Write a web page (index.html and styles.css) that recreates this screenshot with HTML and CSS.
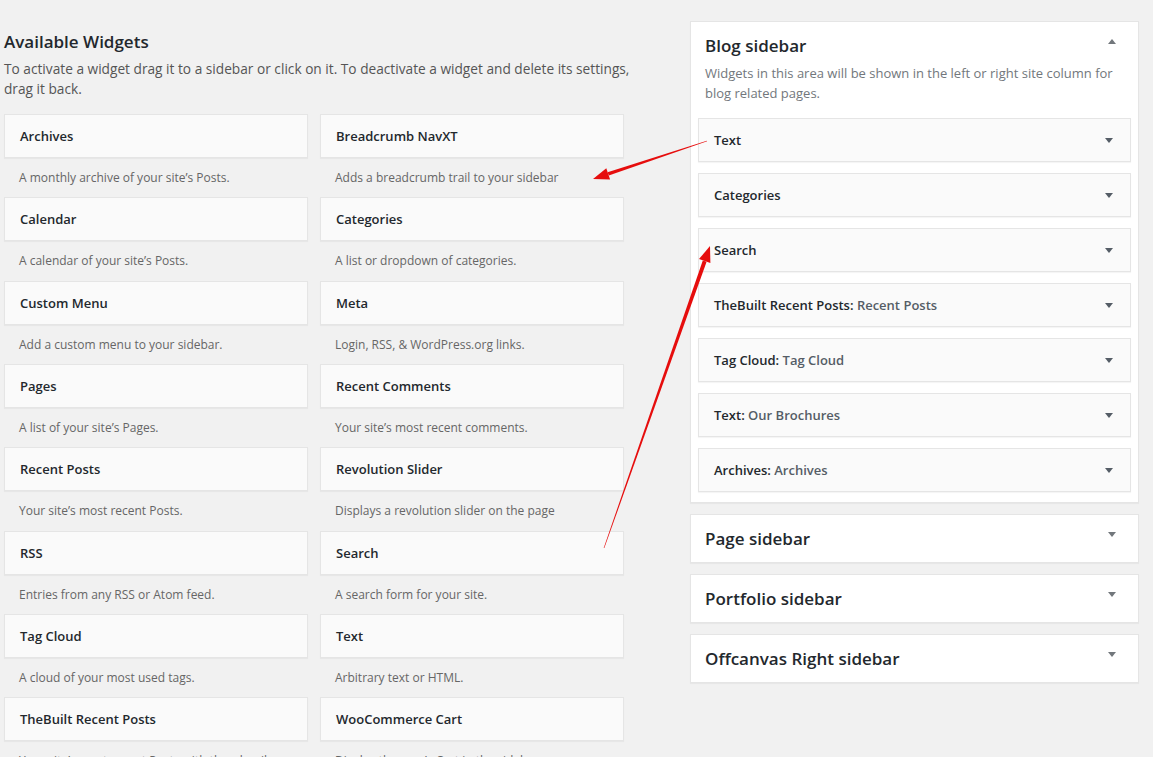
FILE: index.html
```html
<!DOCTYPE html>
<html lang="en">
<head>
<meta charset="utf-8">
<title>Widgets</title>
<link rel="stylesheet" href="styles.css">
</head>
<body>
<div class="page">
  <section class="available">
    <h2 class="section-title">Available Widgets</h2>
    <p class="section-desc">To activate a widget drag it to a sidebar or click on it. To deactivate a widget and delete its settings, drag it back.</p>
    <div class="widget-grid">
      <div class="widget-item"><div class="widget-card">Archives</div><p class="widget-desc">A monthly archive of your site’s Posts.</p></div>
      <div class="widget-item"><div class="widget-card">Breadcrumb NavXT</div><p class="widget-desc">Adds a breadcrumb trail to your sidebar</p></div>
      <div class="widget-item"><div class="widget-card">Calendar</div><p class="widget-desc">A calendar of your site’s Posts.</p></div>
      <div class="widget-item"><div class="widget-card">Categories</div><p class="widget-desc">A list or dropdown of categories.</p></div>
      <div class="widget-item"><div class="widget-card">Custom Menu</div><p class="widget-desc">Add a custom menu to your sidebar.</p></div>
      <div class="widget-item"><div class="widget-card">Meta</div><p class="widget-desc">Login, RSS, &amp; WordPress.org links.</p></div>
      <div class="widget-item"><div class="widget-card">Pages</div><p class="widget-desc">A list of your site’s Pages.</p></div>
      <div class="widget-item"><div class="widget-card">Recent Comments</div><p class="widget-desc">Your site’s most recent comments.</p></div>
      <div class="widget-item"><div class="widget-card">Recent Posts</div><p class="widget-desc">Your site’s most recent Posts.</p></div>
      <div class="widget-item"><div class="widget-card">Revolution Slider</div><p class="widget-desc">Displays a revolution slider on the page</p></div>
      <div class="widget-item"><div class="widget-card">RSS</div><p class="widget-desc">Entries from any RSS or Atom feed.</p></div>
      <div class="widget-item"><div class="widget-card">Search</div><p class="widget-desc">A search form for your site.</p></div>
      <div class="widget-item"><div class="widget-card">Tag Cloud</div><p class="widget-desc">A cloud of your most used tags.</p></div>
      <div class="widget-item"><div class="widget-card">Text</div><p class="widget-desc">Arbitrary text or HTML.</p></div>
      <div class="widget-item"><div class="widget-card">TheBuilt Recent Posts</div><p class="widget-desc">Your site’s most recent Posts with thumbnails.</p></div>
      <div class="widget-item"><div class="widget-card">WooCommerce Cart</div><p class="widget-desc">Display the user’s Cart in the sidebar.</p></div>
    </div>
  </section>

  <section class="sidebars">
    <div class="sidebar-panel open">
      <div class="sidebar-head">
        <h2 class="sidebar-title">Blog sidebar</h2>
        <span class="toggle-up"></span>
      </div>
      <p class="sidebar-desc">Widgets in this area will be shown in the left or right site column for blog related pages.</p>
      <div class="sidebar-widgets">
        <div class="sb-widget"><span class="sb-title">Text</span><span class="caret"></span></div>
        <div class="sb-widget"><span class="sb-title">Categories</span><span class="caret"></span></div>
        <div class="sb-widget"><span class="sb-title">Search</span><span class="caret"></span></div>
        <div class="sb-widget"><span class="sb-title">TheBuilt Recent Posts: <span class="sb-sub">Recent Posts</span></span><span class="caret"></span></div>
        <div class="sb-widget"><span class="sb-title">Tag Cloud: <span class="sb-sub">Tag Cloud</span></span><span class="caret"></span></div>
        <div class="sb-widget"><span class="sb-title">Text: <span class="sb-sub">Our Brochures</span></span><span class="caret"></span></div>
        <div class="sb-widget"><span class="sb-title">Archives: <span class="sb-sub">Archives</span></span><span class="caret"></span></div>
      </div>
    </div>
    <div class="sidebar-panel closed">
      <div class="sidebar-head">
        <h2 class="sidebar-title">Page sidebar</h2>
        <span class="toggle-down"></span>
      </div>
    </div>
    <div class="sidebar-panel closed">
      <div class="sidebar-head">
        <h2 class="sidebar-title">Portfolio sidebar</h2>
        <span class="toggle-down"></span>
      </div>
    </div>
    <div class="sidebar-panel closed">
      <div class="sidebar-head">
        <h2 class="sidebar-title">Offcanvas Right sidebar</h2>
        <span class="toggle-down"></span>
      </div>
    </div>
  </section>
</div>

<svg class="annotations" width="1153" height="757" viewBox="0 0 1153 757" xmlns="http://www.w3.org/2000/svg">
  <polygon fill="#e60d0d" points="707.1,141.3 706.9,140.7 607.6,172.2 608.8,175.6"/>
  <polygon fill="#e60d0d" points="593,179 606.3,168.2 610.1,179.6"/>
  <polygon fill="#e60d0d" points="604.3,548.1 603.7,547.9 702.8,260.4 706.6,261.8"/>
  <polygon fill="#e60d0d" points="710,246 699,259.1 710.4,263.1"/>
</svg>
</body>
</html>
```

FILE: styles.css
```css
html, body {
  margin: 0;
  padding: 0;
}

body {
  background: #f1f1f1;
  font-family: "Open Sans", "Noto Sans", "Liberation Sans", sans-serif;
  color: #23282d;
  font-size: 13px;
  position: relative;
  overflow: hidden;
  height: 757px;
}

.page {
  display: flex;
  align-items: flex-start;
  padding-left: 4px;
}

/* ---------- Available widgets ---------- */
.available {
  width: 620px;
  padding-top: 30px;
}

.section-title {
  margin: 0 0 5px;
  font-size: 17px;
  line-height: 24px;
  font-weight: 600;
  color: #23282d;
}

.section-desc {
  margin: 0 0 15px;
  width: 640px;
  font-size: 13.7px;
  line-height: 20px;
  color: #555;
}

.widget-grid {
  display: grid;
  grid-template-columns: 304px 304px;
  column-gap: 12px;
}

.widget-card {
  height: 42px;
  box-sizing: content-box;
  background: #fafafa;
  border: 1px solid #e5e5e5;
  box-shadow: 0 1px 1px rgba(0, 0, 0, 0.04);
  padding: 0 15px;
  font-size: 13px;
  font-weight: 600;
  line-height: 42px;
  color: #23282d;
}

.widget-desc {
  margin: 0;
  padding: 10px 15px;
  line-height: 19.33px;
  font-size: 12px;
  color: #666;
  white-space: nowrap;
}

/* ---------- Sidebars ---------- */
.sidebars {
  margin-left: 66px;
  padding-top: 21px;
  width: 449px;
  display: flex;
  flex-direction: column;
  gap: 11px;
}

.sidebar-panel {
  background: #fff;
  border: 1px solid #e5e5e5;
  box-shadow: 0 1px 1px rgba(0, 0, 0, 0.04);
}

.sidebar-panel.open {
  padding: 0 7px 10px;
}

.sidebar-head {
  display: flex;
  justify-content: space-between;
  align-items: flex-start;
  padding: 12px 22px 11px 14px;
}

.open .sidebar-head {
  padding: 12px 15px 0 7px;
}

.sidebar-title {
  margin: 0;
  font-size: 17px;
  line-height: 24px;
  font-weight: 600;
  color: #23282d;
}

.toggle-up,
.toggle-down {
  width: 0;
  height: 0;
  border-left: 4px solid transparent;
  border-right: 4px solid transparent;
  margin-top: 5px;
}

.toggle-up {
  border-bottom: 5px solid #72777c;
}

.toggle-down {
  border-top: 5px solid #72777c;
}

.sidebar-desc {
  margin: 5px 0 15px;
  padding: 0 7px;
  font-size: 13px;
  line-height: 20px;
  color: #72777c;
}

.sidebar-widgets {
  display: flex;
  flex-direction: column;
  gap: 11px;
}

.sb-widget {
  display: flex;
  align-items: center;
  justify-content: space-between;
  height: 42px;
  background: #fafafa;
  border: 1px solid #e5e5e5;
  box-shadow: 0 1px 1px rgba(0, 0, 0, 0.04);
  padding: 0 17px 0 15px;
}

.sb-title {
  font-size: 13px;
  font-weight: 600;
  color: #23282d;
}

.sb-sub {
  color: #555d66;
}

.caret {
  width: 0;
  height: 0;
  border-left: 4px solid transparent;
  border-right: 4px solid transparent;
  border-top: 5px solid #555d66;
}

/* ---------- Overlay annotations ---------- */
.annotations {
  position: absolute;
  top: 0;
  left: 0;
  pointer-events: none;
}
```
